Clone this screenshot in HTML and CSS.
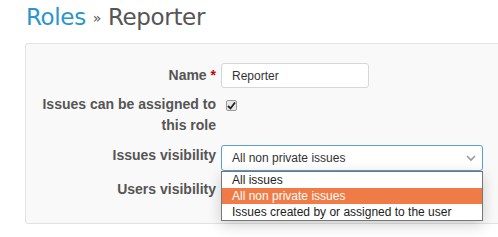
FILE: index.html
```
<!DOCTYPE html>
<html>
<head>
<meta charset="utf-8">
<link rel="stylesheet" href="styles.css">
</head>
<body>
<div class="page">
<h2 class="title"><a class="crumb" href="#">Roles</a> <span class="sep">»</span> Reporter</h2>
<div class="box">
  <div class="row row-name">
    <label class="lbl">Name <span class="req">*</span></label>
    <div class="field"><input class="text" type="text" value="Reporter"></div>
  </div>
  <div class="row row-assign">
    <label class="lbl">Issues can be assigned to this role</label>
    <div class="field"><span class="check"><svg width="9" height="9" viewBox="0 0 9 9"><path d="M1 5 L3.5 7.5 L8 1.5" fill="none" stroke="#222" stroke-width="1.8"/></svg></span></div>
  </div>
  <div class="row row-vis">
    <label class="lbl">Issues visibility</label>
    <div class="field">
      <div class="select">
        <span>All non private issues</span>
        <svg class="chev" width="10" height="7" viewBox="0 0 10 7"><path d="M1 1 L5 5 L9 1" fill="none" stroke="#999" stroke-width="1.6"/></svg>
      </div>
      <ul class="dropdown">
        <li>All issues</li>
        <li class="hl">All non private issues</li>
        <li>Issues created by or assigned to the user</li>
      </ul>
    </div>
  </div>
  <div class="row row-users">
    <label class="lbl">Users visibility</label>
    <div class="field"></div>
  </div>
</div>
</div>
</body>
</html>
```
FILE: styles.css
```
html, body { margin: 0; padding: 0; background: #fff; }
body { font-family: "Liberation Sans", Arial, sans-serif; color: #333; }
.page { width: 498px; height: 237px; overflow: hidden; position: relative; }
.title {
  margin: 0;
  padding: 4px 0 0 26px;
  height: 39px;
  box-sizing: border-box;
  font-family: "DejaVu Sans", sans-serif;
  font-weight: normal;
  font-size: 23px;
  color: #555;
  letter-spacing: -0.35px;
}
.crumb { color: #2a96cc; text-decoration: none; }
.sep { font-size: 14px; vertical-align: 2px; }
.box {
  margin: 4px 0 0 25px;
  width: 520px;
  height: 181px;
  box-sizing: border-box;
  background: #f9f9f9;
  border: 1px solid #e2e2e2;
  border-radius: 3px;
  padding-top: 19px;
}
.row { display: flex; align-items: flex-start; }
.lbl {
  width: 190px;
  text-align: right;
  font-weight: bold;
  font-size: 14px;
  color: #555;
  line-height: 21px;
  box-sizing: border-box;
}
.req { color: #cc0000; }
.field { margin-left: 5px; position: relative; }
.row-name .lbl { padding-top: 2px; }
.text {
  width: 148px; height: 25px; box-sizing: border-box;
  border: 1px solid #d7d7d7; border-radius: 3px; background: #fff;
  padding: 0 10px; font-family: "Liberation Sans", Arial, sans-serif; font-size: 12px; color: #333;
  margin: 0; display: block;
}
.row-assign { margin-top: 6px; }
.check {
  display: block; width: 9px; height: 9px; margin: 6px 0 0 5px;
  border: 1px solid #999; border-radius: 2px; background: #e8e8e8;
  position: relative;
}
.check svg { position: absolute; left: 0; top: 0; }
.row-vis { margin-top: 9px; }
.select {
  width: 262px; height: 26px; box-sizing: border-box;
  border: 1px solid #5a9fd0; border-radius: 3px; background: #fff;
  font-size: 12px; color: #333; padding: 0 10px;
  display: flex; align-items: center; justify-content: space-between;
}
.chev { margin-right: -4px; }
.dropdown {
  position: absolute; left: 0; top: 26px; z-index: 2;
  list-style: none; margin: 0; padding: 0;
  width: 262px; box-sizing: border-box;
  border: 1px solid #767676; background: #fff;
  box-shadow: 0 4px 14px rgba(0,0,0,0.18);
  font-size: 12px; color: #222;
}
.dropdown li { height: 16px; line-height: 16px; padding-left: 10px; }
.dropdown li.hl { background: #f07b46; color: #fff; }
.row-users { margin-top: 8px; }
```
